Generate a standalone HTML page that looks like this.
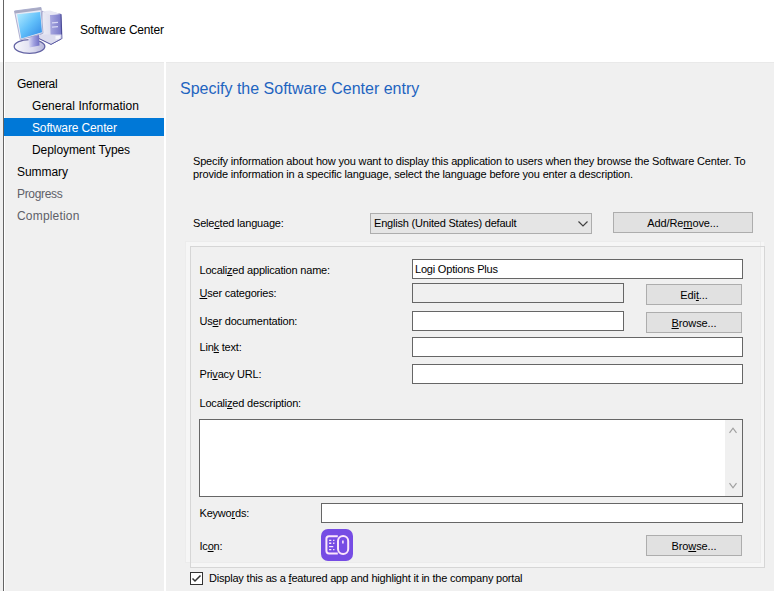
<!DOCTYPE html>
<html><head><meta charset="utf-8">
<style>
*{margin:0;padding:0;box-sizing:border-box}
html,body{width:774px;height:591px;overflow:hidden;background:#fff}
body{position:relative;font-family:"Liberation Sans",sans-serif;color:#000}
.a{position:absolute}
.t{position:absolute;white-space:nowrap;font-size:11px;line-height:13px;letter-spacing:-0.2px}
.n{position:absolute;white-space:nowrap;font-size:12px;line-height:15px;letter-spacing:-0.2px}
u{text-decoration:underline;text-underline-offset:1px;text-decoration-thickness:1px}
.tb{position:absolute;background:#fff;border:1px solid #666}
.btn{position:absolute;background:#e1e1e1;border:1px solid #adadad;text-align:center;font-size:11px;letter-spacing:-0.1px}
</style></head><body>
<!-- left window border -->
<div class="a" style="left:3px;top:0;width:1px;height:591px;background:#646464"></div>
<div class="a" style="left:0;top:62px;width:3px;height:529px;background:#f0f0f0"></div>

<!-- header icon -->
<svg class="a" style="left:0;top:0" width="70" height="60" viewBox="0 0 70 60">
  <defs>
    <linearGradient id="scr" x1="0" y1="0" x2="1" y2="1">
      <stop offset="0" stop-color="#b8eeff"/><stop offset="0.5" stop-color="#62c0fa"/><stop offset="1" stop-color="#2e86e4"/>
    </linearGradient>
    <linearGradient id="tow" x1="0" y1="0" x2="1" y2="0">
      <stop offset="0" stop-color="#f0f0f8"/><stop offset="1" stop-color="#d0d0e8"/>
    </linearGradient>
    <linearGradient id="twr" x1="0" y1="0" x2="1" y2="0">
      <stop offset="0" stop-color="#a8a8e0"/><stop offset="1" stop-color="#7878c8"/>
    </linearGradient>
    <linearGradient id="base" x1="0" y1="0" x2="1" y2="0">
      <stop offset="0" stop-color="#f8f8fc"/><stop offset="0.6" stop-color="#dedef0"/><stop offset="1" stop-color="#b4b4da"/>
    </linearGradient>
    <linearGradient id="neck" x1="0" y1="0" x2="1" y2="0">
      <stop offset="0" stop-color="#e4e4f6"/><stop offset="0.5" stop-color="#a0a0e0"/><stop offset="1" stop-color="#7070c4"/>
    </linearGradient>
  </defs>
  <!-- tower -->
  <path d="M42 11.3 L60.5 14 L61.5 38.8 L51 44.4 L39 38.5 L41 34 Z" fill="url(#tow)" stroke="#7a7ab8" stroke-width="0.8"/>
  <path d="M50 15 L60.5 14 L61.5 38.8 L51 44.4 L50.5 34 Z" fill="url(#twr)"/>
  <path d="M61 14.2 L61.8 38.8" stroke="#4c4c98" stroke-width="1.2"/>
  <path d="M42 11.3 L50 10.5 L60.5 14 L50 15 Z" fill="#e8e8f4"/>
  <path d="M52 22.8 L58 22.3 M52 27.2 L58 26.7" stroke="#d8d8f4" stroke-width="1.2"/>
  <path d="M39.5 34.5 L61.5 34.5 L61.5 38.8 L51 44.4 L39 38.5 Z" fill="#dcdcee"/>
  <path d="M39 38.5 L51 44.4 L61.5 38.8" fill="none" stroke="#5c5ca4" stroke-width="1"/>
  <path d="M55.5 36 L60 35.8 L60 38.5 L55.5 39.5 Z" fill="#f4f4fc"/>
  <!-- base -->
  <ellipse cx="29.5" cy="46.5" rx="15.3" ry="6.8" fill="url(#base)" stroke="#6464a4" stroke-width="1.3"/>
  <path d="M28 36 L39 35 L39.5 45.5 L29.5 47.5 Z" fill="url(#neck)"/>
  <!-- monitor -->
  <path d="M14.5 11 L41 7.5 L43 33.3 L20.3 39.8 Z" fill="#e8eaf6" stroke="#9ca0c8" stroke-width="0.8"/>
  <path d="M14.5 11 L41 7.5 L41.3 10 L15 13.5 Z" fill="#a8aac4"/>
  <path d="M17 14.3 L40.2 12 L42 32.3 L21.3 38.5 Z" fill="url(#scr)"/>
</svg>
<div class="n" style="left:80px;top:23px">Software Center</div>

<!-- left nav -->
<div class="a" style="left:5px;top:62px;width:159px;height:529px;background:#f0f0f0"></div>
<div class="a" style="left:4px;top:118px;width:160px;height:18px;background:#0078d7"></div>
<div class="n" style="left:17px;top:77px;letter-spacing:-0.35px">General</div>
<div class="n" style="left:32px;top:99px;letter-spacing:0.05px">General Information</div>
<div class="n" style="left:32px;top:121px;color:#fff;letter-spacing:-0.13px">Software Center</div>
<div class="n" style="left:32px;top:143px;letter-spacing:-0.07px">Deployment Types</div>
<div class="n" style="left:17px;top:165px;letter-spacing:-0.05px">Summary</div>
<div class="n" style="left:17px;top:187px;color:#5e6068;letter-spacing:-0.33px">Progress</div>
<div class="n" style="left:17px;top:209px;color:#5e6068;letter-spacing:0.18px">Completion</div>

<!-- right panel -->
<div class="a" style="left:166px;top:62px;width:608px;height:529px;background:#f0f0f0"></div>
<div class="a" style="left:180px;top:79px;font-size:16px;line-height:19px;color:#1e64c0;white-space:nowrap">Specify the Software Center entry</div>

<div class="t" style="left:193px;top:155px;letter-spacing:-0.165px">Specify information about how you want to display this application to users when they browse the Software Center. To</div>
<div class="t" style="left:193px;top:168px;letter-spacing:-0.165px">provide information in a specific language, select the language before you enter a description.</div>

<div class="t" style="left:193px;top:217px">Sele<u>c</u>ted language:</div>
<div class="a" style="left:370px;top:213px;width:222px;height:21px;background:#e5e5e5;border:1px solid #adadad"></div>
<div class="t" style="left:374px;top:217px">English (United States) default</div>
<svg class="a" style="left:577px;top:219px" width="12" height="9" viewBox="0 0 12 9"><path d="M1.5 2.5 L6 7 L10.5 2.5" fill="none" stroke="#404040" stroke-width="1.2"/></svg>
<div class="btn" style="left:613px;top:212px;width:140px;height:21px;line-height:21px">Add/Re<u>m</u>ove...</div>

<div class="a" style="left:5px;top:62px;width:159px;height:1px;background:#e9e9e9"></div>
<div class="a" style="left:166px;top:62px;width:608px;height:1px;background:#e9e9e9"></div>
<!-- group box -->
<div class="a" style="left:186px;top:242px;width:578px;height:4px;background:#f6f6f6"></div>
<div class="a" style="left:186px;top:242px;width:4px;height:321px;background:#f6f6f6"></div>
<div class="a" style="left:191px;top:563px;width:570px;height:4px;background:#f6f6f6"></div>
<div class="a" style="left:761px;top:247px;width:3px;height:320px;background:#f6f6f6"></div>
<div class="a" style="left:185px;top:241px;width:576px;height:322px;border:1px solid #ececec"></div>
<div class="a" style="left:190px;top:246px;width:575px;height:322px;border:1px solid #d6d6d6"></div>
<div class="t" style="left:199.5px;top:264px">Locali<u>z</u>ed application name:</div>
<div class="tb" style="left:412px;top:259px;width:331px;height:20px"></div>
<div class="t" style="left:415px;top:263px">Logi Options Plus</div>

<div class="t" style="left:199.5px;top:287px"><u>U</u>ser categories:</div>
<div class="tb" style="left:412px;top:283px;width:212px;height:20px;background:#f0f0f0"></div>
<div class="btn" style="left:646px;top:284px;width:96px;height:21px;line-height:21px">Edi<u>t</u>...</div>

<div class="t" style="left:199.5px;top:315px">Us<u>e</u>r documentation:</div>
<div class="tb" style="left:412px;top:311px;width:212px;height:20px"></div>
<div class="btn" style="left:646px;top:312px;width:96px;height:21px;line-height:21px"><u>B</u>rowse...</div>

<div class="t" style="left:199.5px;top:341px">Lin<u>k</u> text:</div>
<div class="tb" style="left:412px;top:337px;width:331px;height:20px"></div>

<div class="t" style="left:199.5px;top:368px">Pri<u>v</u>acy URL:</div>
<div class="tb" style="left:412px;top:364px;width:331px;height:20px"></div>

<div class="t" style="left:199.5px;top:397px">Locali<u>z</u>ed description:</div>
<div class="tb" style="left:199px;top:419px;width:544px;height:78px"></div>
<div class="a" style="left:725px;top:420px;width:17px;height:76px;background:#f0f0f0"></div>
<svg class="a" style="left:727px;top:425px" width="12" height="10" viewBox="0 0 12 10"><path d="M2.5 7.8 L6 3.2 L9.5 7.8" fill="none" stroke="#a0a0a0" stroke-width="1.2"/></svg>
<svg class="a" style="left:727px;top:481px" width="12" height="10" viewBox="0 0 12 10"><path d="M2.5 2.2 L6 6.8 L9.5 2.2" fill="none" stroke="#a0a0a0" stroke-width="1.2"/></svg>

<div class="t" style="left:199.5px;top:507px">Keywo<u>r</u>ds:</div>
<div class="tb" style="left:321px;top:503px;width:422px;height:20px"></div>

<div class="t" style="left:199.5px;top:540px">Ic<u>o</u>n:</div>
<svg class="a" style="left:321px;top:529px" width="32" height="32" viewBox="0 0 32 32">
  <rect x="0" y="0" width="32" height="32" rx="7" fill="#764ce4"/>
  <path d="M16.8 7.2 H8 A2.6 2.6 0 0 0 5.4 9.8 V21.8 A2.6 2.6 0 0 0 8 24.4 H16.8" fill="none" stroke="#fce6fb" stroke-width="2"/>
  <rect x="17" y="7" width="10.2" height="18" rx="5.1" fill="none" stroke="#fce6fb" stroke-width="2"/>
  <path d="M21.9 11.4 V14.6" stroke="#fce6fb" stroke-width="1.6"/>
  <path d="M8.1 11.4 H10.3 M12.1 11.4 H13.4 M8.1 14.3 H10.3 M12.1 14.3 H13.4 M8.1 17.6 H12.3 M8.1 20.6 H10.3 M12.1 20.6 H13.4" stroke="#fce6fb" stroke-width="1.4"/>
</svg>
<div class="btn" style="left:646px;top:535px;width:96px;height:21px;line-height:21px">Bro<u>w</u>se...</div>

<!-- checkbox -->
<div class="a" style="left:190px;top:572px;width:13px;height:13px;border:1px solid #333;background:#fff"></div>
<svg class="a" style="left:190px;top:572px" width="13" height="13" viewBox="0 0 13 13"><path d="M2.5 6.5 L5 9 L10.5 3.5" fill="none" stroke="#333" stroke-width="1.5"/></svg>
<div class="t" style="left:209px;top:572px">Display this as a <u>f</u>eatured app and highlight it in the company portal</div>
</body></html>
